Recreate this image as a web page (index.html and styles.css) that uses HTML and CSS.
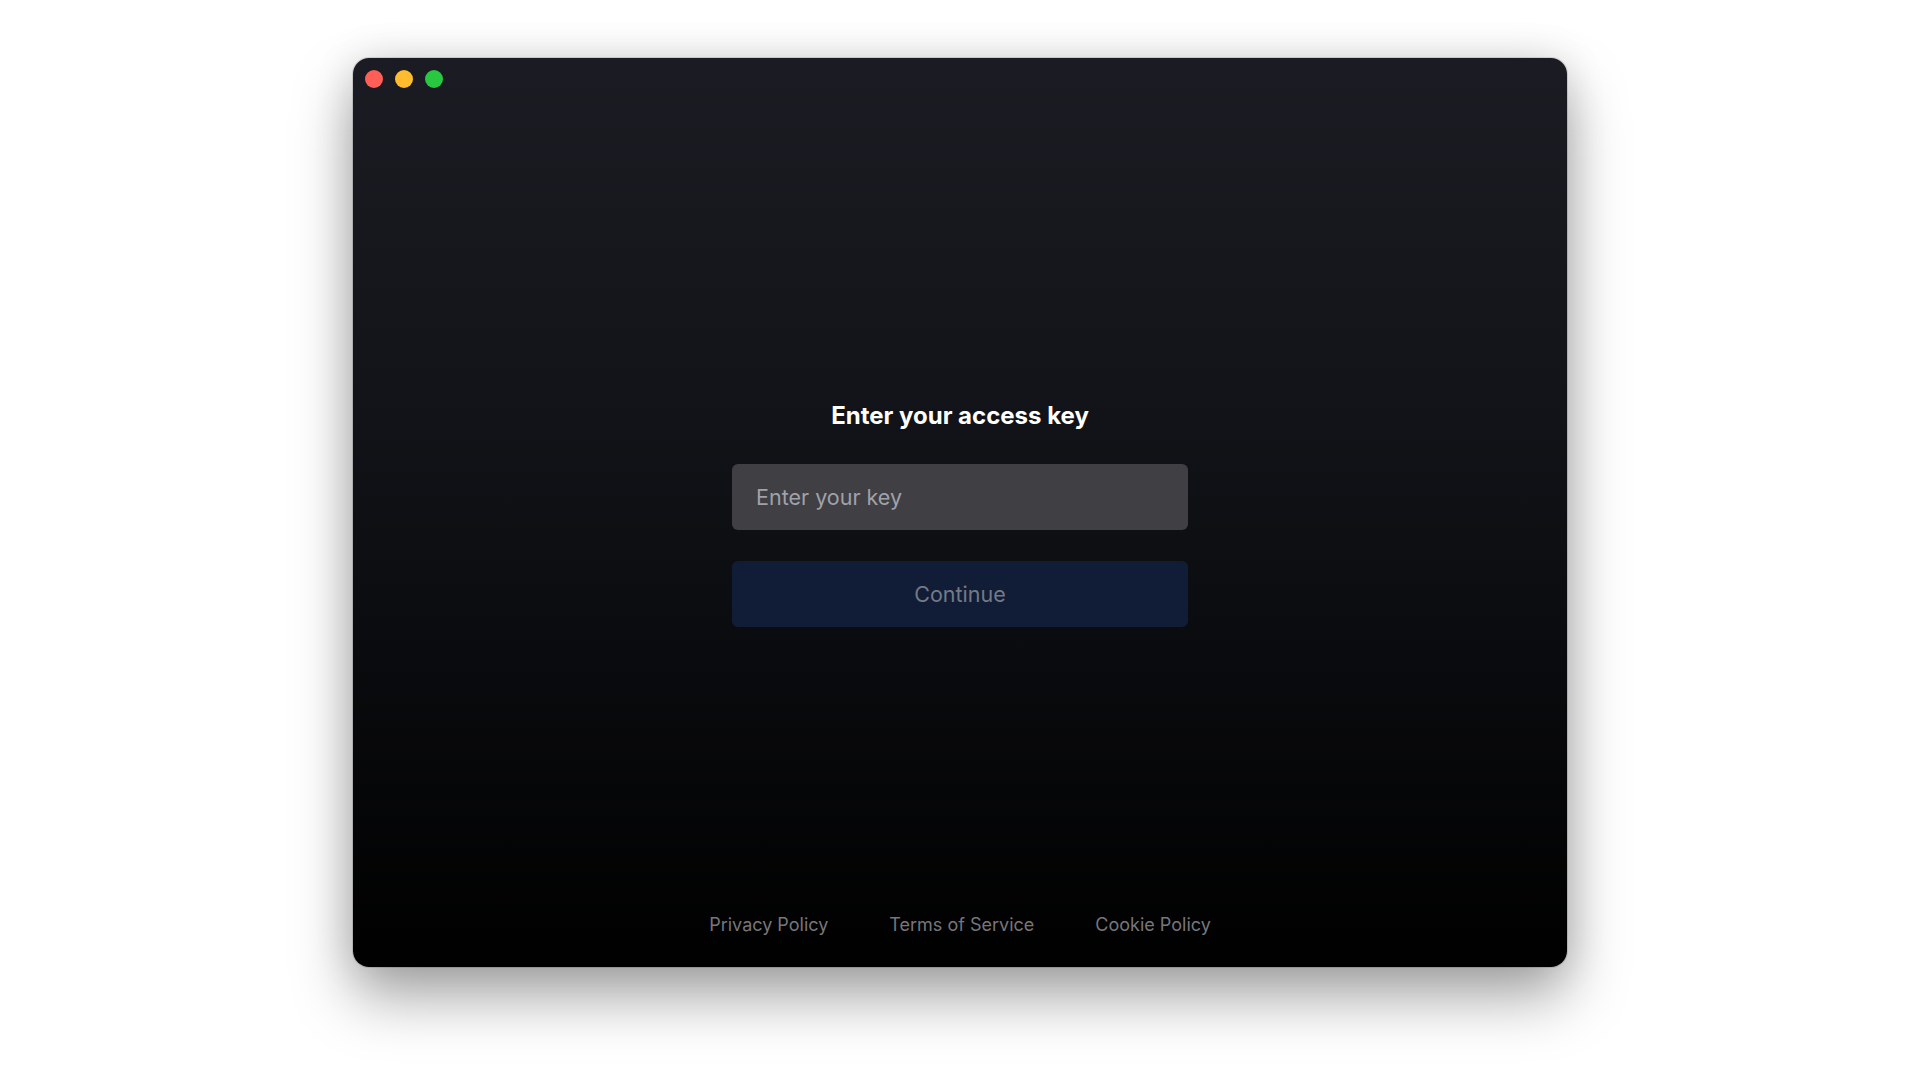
FILE: index.html
```html
<!DOCTYPE html>
<html lang="en">
<head>
<meta charset="utf-8">
<title>Access key</title>
<link rel="stylesheet" href="styles.css">
</head>
<body>
<div class="window">
  <div class="titlebar">
    <span class="light red"></span>
    <span class="light yellow"></span>
    <span class="light green"></span>
  </div>
  <main class="main">
    <h1 class="title">Enter your access key</h1>
    <input class="key-input" type="text" placeholder="Enter your key">
    <button class="continue" type="button">Continue</button>
  </main>
  <footer class="footer">
    <a class="link" href="#">Privacy Policy</a>
    <a class="link" href="#">Terms of Service</a>
    <a class="link" href="#">Cookie Policy</a>
  </footer>
</div>
</body>
</html>
```
FILE: styles.css
```css
* { box-sizing: border-box; }
html, body { margin: 0; padding: 0; }
body {
  width: 1920px;
  height: 1080px;
  background: #ffffff;
  font-family: Inter, "Noto Sans", sans-serif;
  overflow: hidden;
}
.window {
  width: 1214px;
  height: 909px;
  margin: 58px auto 0;
  border-radius: 16px;
  background: linear-gradient(180deg, #1b1c23 0%, #111318 40%, #000000 100%);
  box-shadow: 0 0 0 1px rgba(0,0,0,0.12), 0 30px 60px rgba(0,0,0,0.35), 0 0 40px rgba(0,0,0,0.12);
  display: flex;
  flex-direction: column;
  overflow: hidden;
}
.titlebar {
  display: flex;
  gap: 12px;
  padding: 12px;
}
.light {
  width: 18px;
  height: 18px;
  border-radius: 50%;
}
.red { background: #ff5f57; }
.yellow { background: #febc2e; }
.green { background: #28c840; }
.main {
  display: flex;
  flex-direction: column;
  align-items: center;
  padding-top: 300px;
}
.title {
  margin: 0;
  font-size: 24px;
  line-height: 32px;
  font-weight: 700;
  color: #ffffff;
}
.key-input {
  margin-top: 32px;
  width: 456px;
  height: 66px;
  border: none;
  outline: none;
  border-radius: 6px;
  background: #3f3f44;
  padding: 0 24px;
  font-family: inherit;
  font-size: 21.5px;
  color: #ffffff;
}
.key-input::placeholder { color: #a1a1aa; }
.continue {
  margin-top: 31px;
  width: 456px;
  height: 66px;
  border: none;
  border-radius: 6px;
  background: #111d36;
  font-family: inherit;
  font-size: 21.5px;
  color: #737a86;
}
.footer {
  margin-top: auto;
  display: flex;
  justify-content: center;
  gap: 61px;
  padding-bottom: 30px;
}
.link {
  font-size: 18px;
  line-height: 24px;
  color: #76767b;
  text-decoration: none;
}
```
